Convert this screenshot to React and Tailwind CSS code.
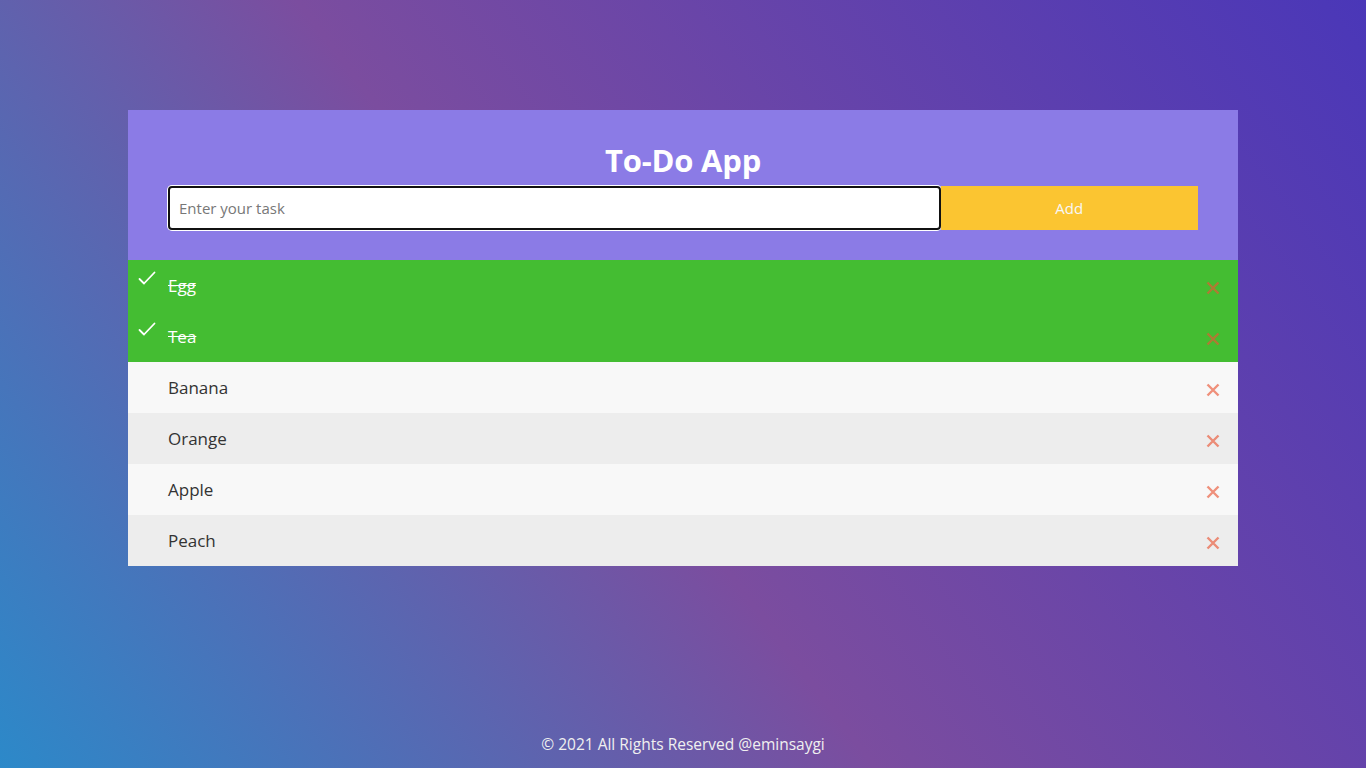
import React from "react";

const items = [
  { text: "Egg", done: true },
  { text: "Tea", done: true },
  { text: "Banana", done: false },
  { text: "Orange", done: false },
  { text: "Apple", done: false },
  { text: "Peach", done: false },
];

function Cross() {
  return (
    <svg width="14" height="14" viewBox="0 0 14 14" className="opacity-[0.64]" fill="none">
      <path d="M1.5 1.5 L12.5 12.5 M12.5 1.5 L1.5 12.5" stroke="#eb5635" strokeWidth="2.4" strokeLinecap="butt" />
    </svg>
  );
}

export default function App() {
  return (
    <div
      className="min-h-screen h-screen w-full flex flex-col bg-[linear-gradient(53deg,#2c89c9_0%,#7b4d9f_45%,#4a37b8_100%)]"
      style={{ fontFamily: '"Open Sans", "Noto Sans", sans-serif' }}
    >
      <div className="mx-[128px] mt-[110px] flex flex-col">
        <div className="bg-[#8b7be6] px-[40px] pt-[30px] pb-[30px] flex flex-col">
          <h1 className="text-center text-white font-bold text-[31px] leading-[40px] tracking-[-0.2px]">To-Do App</h1>
          <div className="flex mt-[6px] h-[44px]">
            <input
              placeholder="Enter your task"
              className="w-[75%] h-[44px] bg-white border-2 border-[#111] rounded-[4px] shadow-[0_0_0_1px_white] px-[9px] text-[15px] text-[#333] placeholder:text-[#777] outline-none"
            />
            <button className="flex-1 bg-[#fbc531] text-[#f7f7f7] text-[15px] h-[44px]">Add</button>
          </div>
        </div>
        <ul className="flex flex-col">
          {items.map((it, i) => (
            <li
              key={it.text}
              className={
                "relative h-[51px] flex items-center pl-[40px] pr-[18px] " +
                (it.done ? "bg-[#44bd32]" : i % 2 === 0 ? "bg-[#f8f8f8]" : "bg-[#ededed]")
              }
            >
              {it.done && (
                <svg width="18" height="15" viewBox="0 0 18 15" className="absolute left-[10px] top-[11px]" fill="none">
                  <path d="M1.5 8 L6 12.5 L16.5 1.5" stroke="white" strokeWidth="1.8" strokeLinecap="round" strokeLinejoin="round" />
                </svg>
              )}
              <span
                className={
                  "flex-1 text-[17px] leading-none " +
                  (it.done ? "text-white line-through decoration-white" : "text-[#333]")
                }
              >
                {it.text}
              </span>
              <span className="mt-[5px]">
                <Cross />
              </span>
            </li>
          ))}
        </ul>
      </div>
      <div className="flex-1" />
      <footer className="text-center text-[#f0f0f0] text-[15.5px] pb-[12px]">© 2021 All Rights Reserved @eminsaygi</footer>
    </div>
  );
}
